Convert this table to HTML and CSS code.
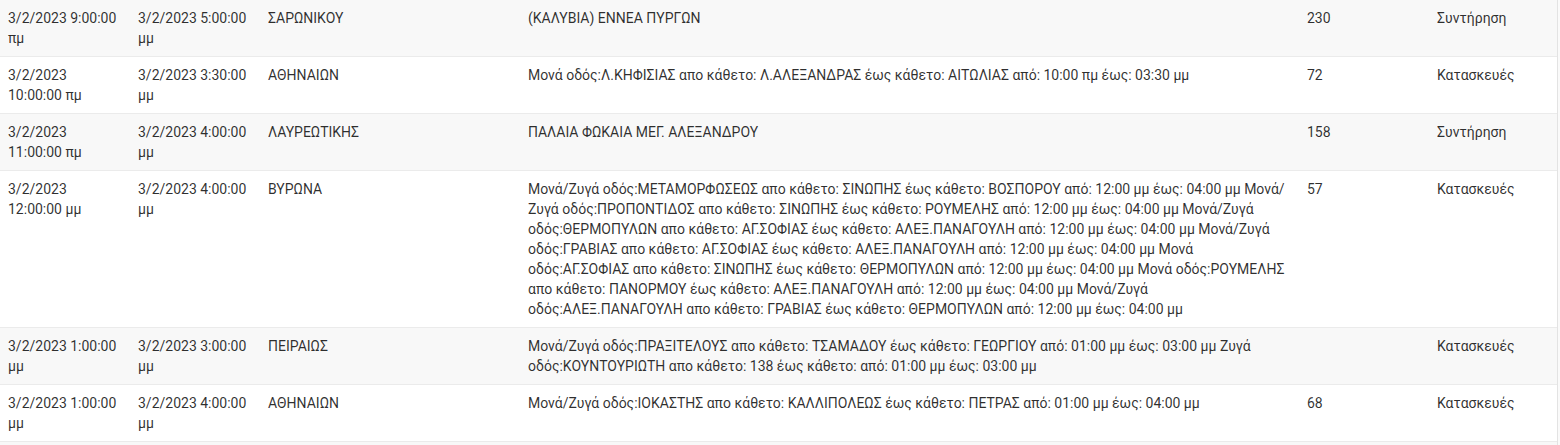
FILE: index.html
```html
<!DOCTYPE html>
<html lang="el">
<head>
<meta charset="utf-8">
<title>Εργασίες</title>
<link rel="stylesheet" href="styles.css">
</head>
<body>
<div class="wrap">
<table class="grid">
<colgroup>
<col class="c1"><col class="c2"><col class="c3"><col class="c4"><col class="c5"><col class="c6">
</colgroup>
<tbody>
<tr class="alt">
<td>3/2/2023 9:00:00 πμ</td><td>3/2/2023 5:00:00 μμ</td><td>ΣΑΡΩΝΙΚΟΥ</td><td>(ΚΑΛΥΒΙΑ) ΕΝΝΕΑ ΠΥΡΓΩΝ</td><td>230</td><td>Συντήρηση</td>
</tr>
<tr>
<td>3/2/2023 10:00:00 πμ</td><td>3/2/2023 3:30:00 μμ</td><td>ΑΘΗΝΑΙΩΝ</td><td>Μονά οδός:Λ.ΚΗΦΙΣΙΑΣ απο κάθετο: Λ.ΑΛΕΞΑΝΔΡΑΣ έως κάθετο: ΑΙΤΩΛΙΑΣ από: 10:00 πμ έως: 03:30 μμ</td><td>72</td><td>Κατασκευές</td>
</tr>
<tr class="alt">
<td>3/2/2023 11:00:00 πμ</td><td>3/2/2023 4:00:00 μμ</td><td>ΛΑΥΡΕΩΤΙΚΗΣ</td><td>ΠΑΛΑΙΑ ΦΩΚΑΙΑ ΜΕΓ. ΑΛΕΞΑΝΔΡΟΥ</td><td>158</td><td>Συντήρηση</td>
</tr>
<tr>
<td>3/2/2023 12:00:00 μμ</td><td>3/2/2023 4:00:00 μμ</td><td>ΒΥΡΩΝΑ</td><td>Μονά/Ζυγά οδός:ΜΕΤΑΜΟΡΦΩΣΕΩΣ απο κάθετο: ΣΙΝΩΠΗΣ έως κάθετο: ΒΟΣΠΟΡΟΥ από: 12:00 μμ έως: 04:00 μμ Μονά/Ζυγά οδός:ΠΡΟΠΟΝΤΙΔΟΣ απο κάθετο: ΣΙΝΩΠΗΣ έως κάθετο: ΡΟΥΜΕΛΗΣ από: 12:00 μμ έως: 04:00 μμ Μονά/Ζυγά οδός:ΘΕΡΜΟΠΥΛΩΝ απο κάθετο: ΑΓ.ΣΟΦΙΑΣ έως κάθετο: ΑΛΕΞ.ΠΑΝΑΓΟΥΛΗ από: 12:00 μμ έως: 04:00 μμ Μονά/Ζυγά οδός:ΓΡΑΒΙΑΣ απο κάθετο: ΑΓ.ΣΟΦΙΑΣ έως κάθετο: ΑΛΕΞ.ΠΑΝΑΓΟΥΛΗ από: 12:00 μμ έως: 04:00 μμ Μονά οδός:ΑΓ.ΣΟΦΙΑΣ απο κάθετο: ΣΙΝΩΠΗΣ έως κάθετο: ΘΕΡΜΟΠΥΛΩΝ από: 12:00 μμ έως: 04:00 μμ Μονά οδός:ΡΟΥΜΕΛΗΣ απο κάθετο: ΠΑΝΟΡΜΟΥ έως κάθετο: ΑΛΕΞ.ΠΑΝΑΓΟΥΛΗ από: 12:00 μμ έως: 04:00 μμ Μονά/Ζυγά οδός:ΑΛΕΞ.ΠΑΝΑΓΟΥΛΗ απο κάθετο: ΓΡΑΒΙΑΣ έως κάθετο: ΘΕΡΜΟΠΥΛΩΝ από: 12:00 μμ έως: 04:00 μμ</td><td>57</td><td>Κατασκευές</td>
</tr>
<tr class="alt">
<td>3/2/2023 1:00:00 μμ</td><td>3/2/2023 3:00:00 μμ</td><td>ΠΕΙΡΑΙΩΣ</td><td>Μονά/Ζυγά οδός:ΠΡΑΞΙΤΕΛΟΥΣ απο κάθετο: ΤΣΑΜΑΔΟΥ έως κάθετο: ΓΕΩΡΓΙΟΥ από: 01:00 μμ έως: 03:00 μμ Ζυγά οδός:ΚΟΥΝΤΟΥΡΙΩΤΗ απο κάθετο: 138 έως κάθετο: από: 01:00 μμ έως: 03:00 μμ</td><td></td><td>Κατασκευές</td>
</tr>
<tr>
<td>3/2/2023 1:00:00 μμ</td><td>3/2/2023 4:00:00 μμ</td><td>ΑΘΗΝΑΙΩΝ</td><td>Μονά/Ζυγά οδός:ΙΟΚΑΣΤΗΣ απο κάθετο: ΚΑΛΛΙΠΟΛΕΩΣ έως κάθετο: ΠΕΤΡΑΣ από: 01:00 μμ έως: 04:00 μμ</td><td>68</td><td>Κατασκευές</td>
</tr>
<tr class="alt">
<td>&nbsp;</td><td></td><td></td><td></td><td></td><td></td>
</tr>
</tbody>
</table>
</div>
</body>
</html>
```

FILE: styles.css
```css
html, body {
  margin: 0;
  padding: 0;
  background: #fafafa;
}
.wrap {
  width: 1557px;
  border-right: 1px solid #e3e3e3;
  background: #fff;
  overflow: hidden;
  height: 445px;
}
.grid {
  width: 1557px;
  table-layout: fixed;
  border-collapse: collapse;
  font-family: Roboto, "Noto Sans", sans-serif;
  font-size: 14px;
  line-height: 20px;
  color: rgba(0, 0, 0, 0.82);
}
.c1 { width: 130px; }
.c2 { width: 130px; }
.c3 { width: 260px; }
.c4 { width: 779px; }
.c5 { width: 130px; }
.c6 { width: 128px; }
.grid td {
  padding: 8px 8px;
  vertical-align: top;
  height: 40px;
  border-bottom: 1px solid #ebebeb;
}
.grid tr.alt td {
  background: #f8f8f8;
}
```
